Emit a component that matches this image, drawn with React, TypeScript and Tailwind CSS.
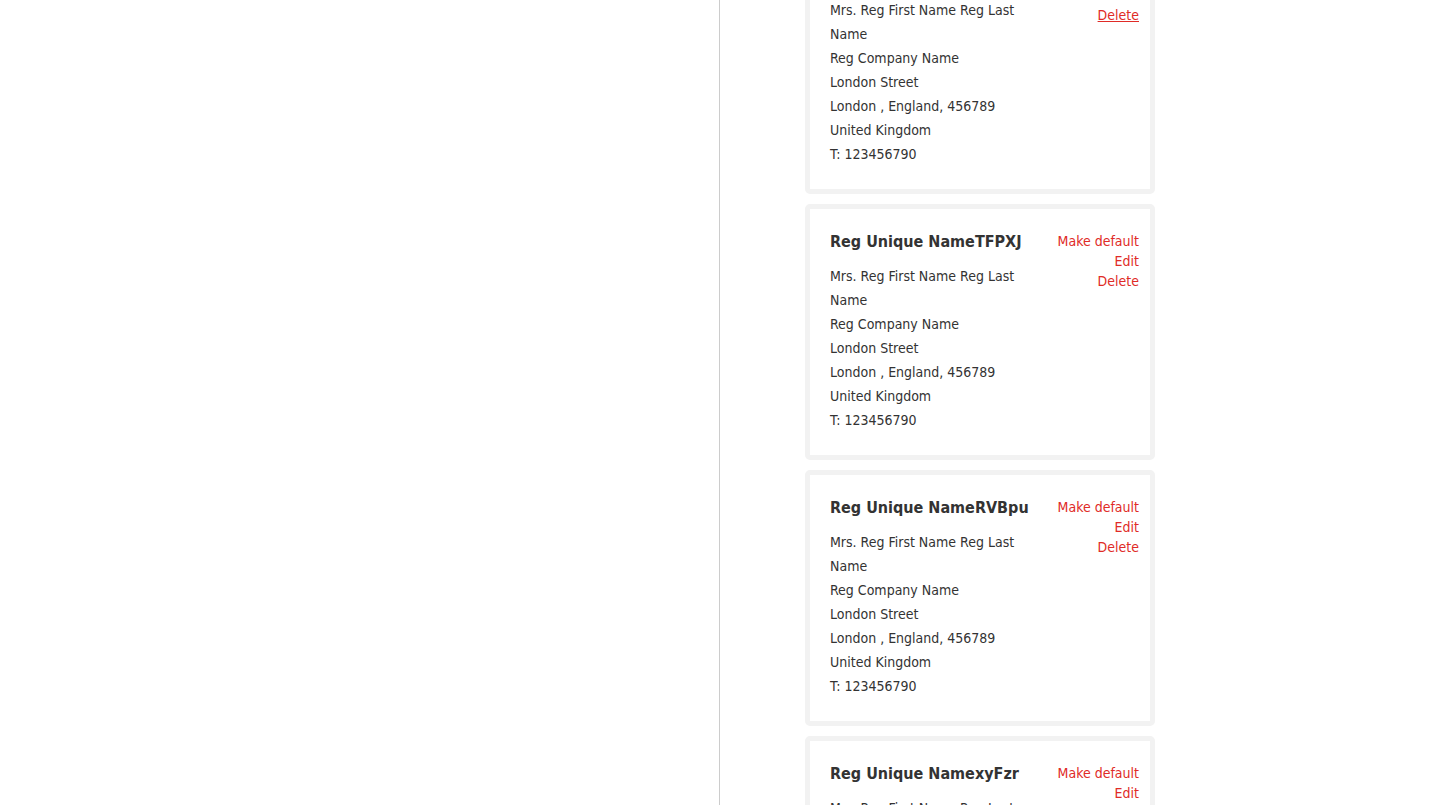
import React from "react";

const cards = [
  { name: "Reg Unique NameAbCdE", underline: true },
  { name: "Reg Unique NameTFPXJ" },
  { name: "Reg Unique NameRVBpu" },
  { name: "Reg Unique NamexyFzr" },
];

function Card({ name, underline }: { name: string; underline?: boolean }) {
  return (
    <div className="w-[350px] rounded-[5px] border-[5px] border-[#f2f2f2] bg-white pl-[20px] pr-[11px] pt-[21px] pb-[23px]">
      <div className="flex justify-between">
        <div className="w-[212px]">
          <div className="whitespace-nowrap text-[16px] font-bold leading-[24px] text-[#333]">{name}</div>
          <div className="mt-[10px] text-[14px] leading-[24px] text-[#333]">
            <div>Mrs. Reg First Name Reg Last Name</div>
            <div>Reg Company Name</div>
            <div>London Street</div>
            <div>London , England, 456789</div>
            <div>United Kingdom</div>
            <div>T: 123456790</div>
          </div>
        </div>
        <div className="mt-[1px] flex flex-col items-end text-[14px] leading-[20px] text-[#e02b27]">
          <a href="#" className="whitespace-nowrap hover:underline">Make default</a>
          <a href="#" className="hover:underline">Edit</a>
          <a href="#" className={underline ? "underline" : "hover:underline"}>Delete</a>
        </div>
      </div>
    </div>
  );
}

export default function App() {
  return (
    <div
      className="flex h-[805px] w-[1440px] overflow-hidden bg-white"
      style={{ fontFamily: "'DejaVu Sans Condensed', 'DejaVu Sans', Verdana, sans-serif" }}
    >
      <div className="w-[720px] shrink-0 border-r border-[#ccc]" />
      <div className="pl-[85px]">
        <div className="-mt-[62px] flex flex-col gap-[10px]">
          {cards.map((c) => (
            <Card key={c.name} name={c.name} underline={c.underline} />
          ))}
        </div>
      </div>
    </div>
  );
}
